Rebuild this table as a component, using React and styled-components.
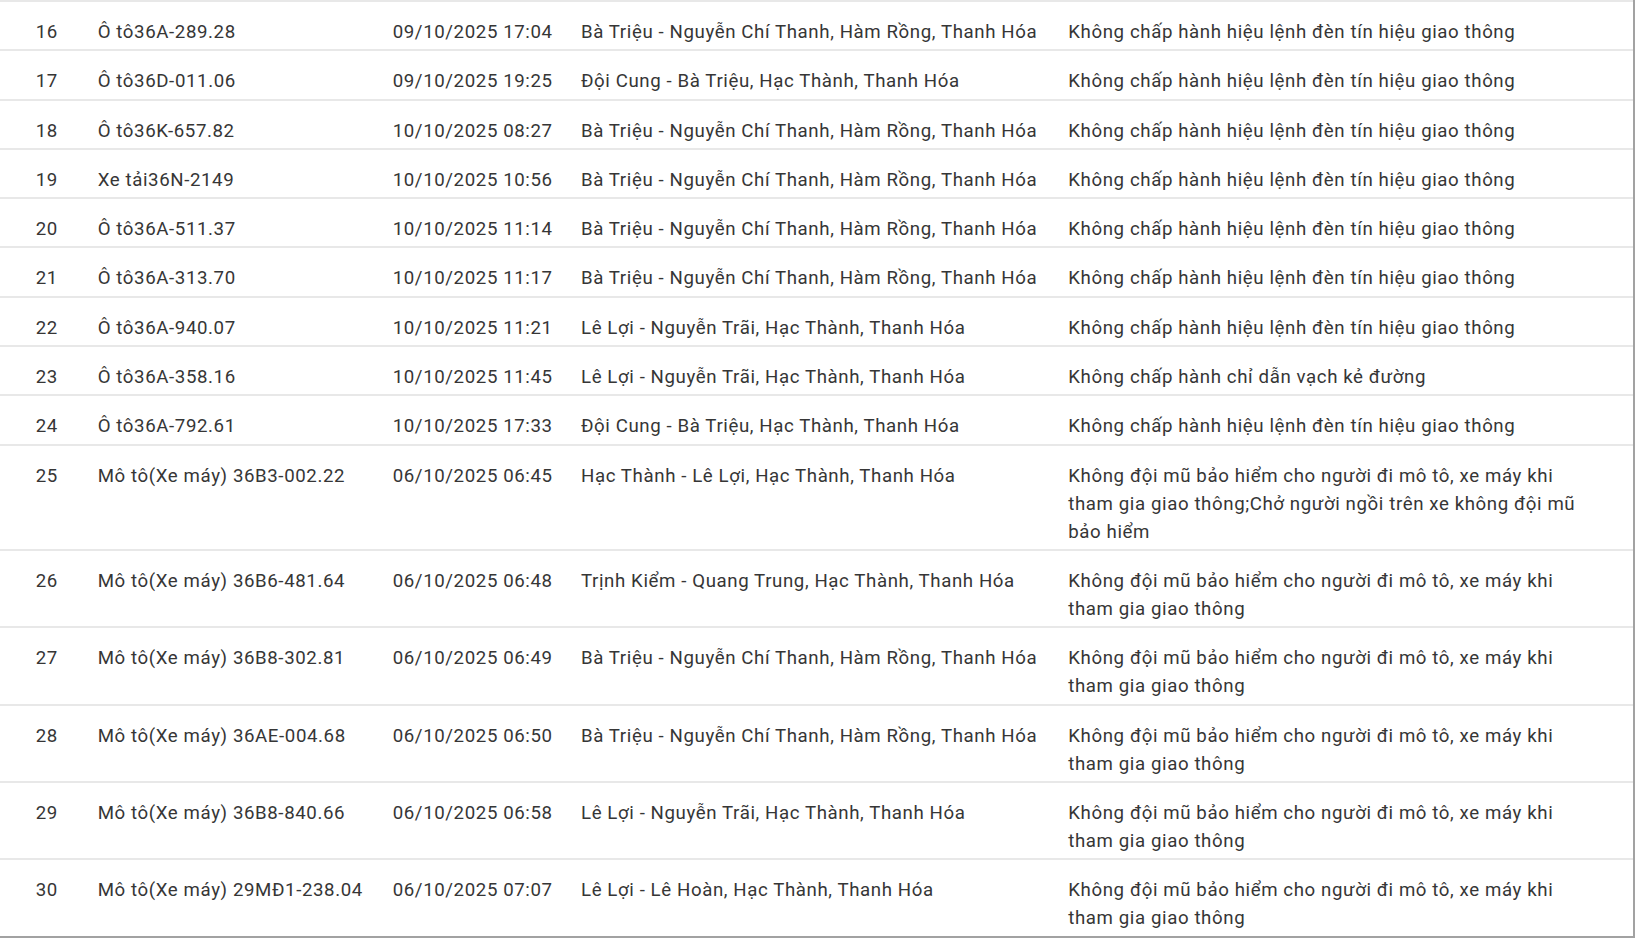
import React from "react";
import styled, { createGlobalStyle } from "styled-components";

const GlobalStyle = createGlobalStyle`
  html, body {
    margin: 0;
    padding: 0;
    background: #ffffff;
  }
  body {
    font-family: Roboto, "Noto Sans", "Liberation Sans", sans-serif;
  }
`;

const Frame = styled.div`
  box-sizing: border-box;
  width: 1635px;
  height: 938px;
  overflow: hidden;
  background: #ffffff;
  border-right: 2px solid #a2a2a2;
  border-bottom: 2px solid #a2a2a2;
`;

const Table = styled.div`
  display: flex;
  flex-direction: column;
  border-top: 2px solid #e8e8e8;
`;

const Row = styled.div`
  display: grid;
  grid-template-columns: 83.7px 295px 188.3px 487.3px 1fr;
  border-bottom: ${(p) => (p.$last ? "none" : "2px solid #e8e8e8")};
`;

const Cell = styled.div`
  box-sizing: border-box;
  min-width: 0;
  padding: 16px ${(p) => p.$padRight || "14px"} 3.3px ${(p) => p.$padLeft || "14px"};
  font-size: 18.67px;
  line-height: 28px;
  letter-spacing: 0.6px;
  color: #363636;
  white-space: ${(p) => (p.$wrap ? "normal" : "nowrap")};
`;

const SIGNAL = "Không chấp hành hiệu lệnh đèn tín hiệu giao thông";
const HELMET = "Không đội mũ bảo hiểm cho người đi mô tô, xe máy khi tham gia giao thông";
const BT = "Bà Triệu - Nguyễn Chí Thanh, Hàm Rồng, Thanh Hóa";
const DC = "Đội Cung - Bà Triệu, Hạc Thành, Thanh Hóa";
const LN = "Lê Lợi - Nguyễn Trãi, Hạc Thành, Thanh Hóa";

const rows = [
  ["16", "Ô tô36A-289.28", "09/10/2025 17:04", BT, SIGNAL],
  ["17", "Ô tô36D-011.06", "09/10/2025 19:25", DC, SIGNAL],
  ["18", "Ô tô36K-657.82", "10/10/2025 08:27", BT, SIGNAL],
  ["19", "Xe tải36N-2149", "10/10/2025 10:56", BT, SIGNAL],
  ["20", "Ô tô36A-511.37", "10/10/2025 11:14", BT, SIGNAL],
  ["21", "Ô tô36A-313.70", "10/10/2025 11:17", BT, SIGNAL],
  ["22", "Ô tô36A-940.07", "10/10/2025 11:21", LN, SIGNAL],
  ["23", "Ô tô36A-358.16", "10/10/2025 11:45", LN, "Không chấp hành chỉ dẫn vạch kẻ đường"],
  ["24", "Ô tô36A-792.61", "10/10/2025 17:33", DC, SIGNAL],
  [
    "25",
    "Mô tô(Xe máy) 36B3-002.22",
    "06/10/2025 06:45",
    "Hạc Thành - Lê Lợi, Hạc Thành, Thanh Hóa",
    "Không đội mũ bảo hiểm cho người đi mô tô, xe máy khi tham gia giao thông;Chở người ngồi trên xe không đội mũ bảo hiểm",
  ],
  ["26", "Mô tô(Xe máy) 36B6-481.64", "06/10/2025 06:48", "Trịnh Kiểm - Quang Trung, Hạc Thành, Thanh Hóa", HELMET],
  ["27", "Mô tô(Xe máy) 36B8-302.81", "06/10/2025 06:49", BT, HELMET],
  ["28", "Mô tô(Xe máy) 36AE-004.68", "06/10/2025 06:50", BT, HELMET],
  ["29", "Mô tô(Xe máy) 36B8-840.66", "06/10/2025 06:58", LN, HELMET],
  ["30", "Mô tô(Xe máy) 29MĐ1-238.04", "06/10/2025 07:07", "Lê Lợi - Lê Hoàn, Hạc Thành, Thanh Hóa", HELMET],
];

export default function App() {
  return (
    <>
      <GlobalStyle />
      <Frame>
        <Table>
          {rows.map((r, i) => (
            <Row key={r[0]} $last={i === rows.length - 1}>
              <Cell $padLeft="35.7px">{r[0]}</Cell>
              <Cell>{r[1]}</Cell>
              <Cell>{r[2]}</Cell>
              <Cell>{r[3]}</Cell>
              <Cell $wrap $padRight="44px">{r[4]}</Cell>
            </Row>
          ))}
        </Table>
      </Frame>
    </>
  );
}
